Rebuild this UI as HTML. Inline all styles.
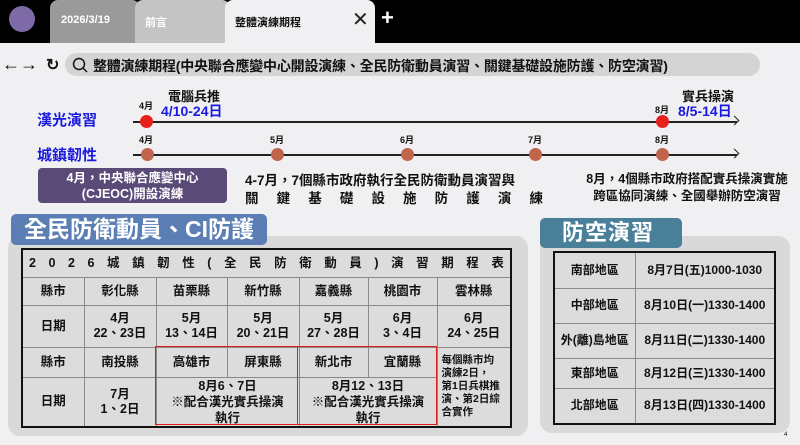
<!DOCTYPE html>
<html><head><meta charset="utf-8"><style>
*{margin:0;padding:0;box-sizing:border-box}
body{width:800px;height:445px;overflow:hidden;background:#f0f0f2;font-family:"Liberation Sans","Noto Sans CJK TC",sans-serif;position:relative;color:#111}
.a{position:absolute;white-space:nowrap}
.b{font-weight:bold}
table{border-collapse:collapse;table-layout:fixed;position:absolute;border:2px solid #111;background:#dcdcdc}
td{border:1px solid #8a8a8a;text-align:center;font-weight:bold;font-size:12.5px;line-height:15px;padding:0}
.dot{position:absolute;width:13px;height:13px;border-radius:50%}
.m{font-size:9px;font-weight:bold;position:absolute}
.j{display:flex;justify-content:space-between}
</style></head><body>
<div class="a" style="left:0;top:0;width:800px;height:43px;background:#000"></div>
<div class="a" style="left:9px;top:6px;width:26px;height:26px;border-radius:50%;background:#7f6aa8"></div>
<div class="a" style="left:50px;top:0;width:90px;height:43px;background:#9a9a9a;border-radius:8px 8px 0 0"></div>
<div class="a" style="left:135px;top:0;width:95px;height:43px;background:#c4c4c4;border-radius:8px 8px 0 0"></div>
<div class="a" style="left:225px;top:0;width:150px;height:43px;background:#f0f0f2;border-radius:8px 8px 0 0"></div>
<div class="a b" style="left:61px;top:14px;font-size:11px;color:#fff">2026/3/19</div>
<div class="a b" style="left:145px;top:14px;font-size:11px;color:#fff">前言</div>
<div class="a b" style="left:235px;top:14px;font-size:11px;color:#111">整體演練期程</div>
<div class="a" style="left:352px;top:7px;font-size:20px;color:#222">✕</div>
<div class="a b" style="left:381px;top:5px;font-size:22px;color:#fff">+</div>
<div class="a b" style="left:2px;top:54px;font-size:18px">←→</div>
<div class="a b" style="left:46px;top:55px;font-size:16px">↻</div>
<div class="a" style="left:65px;top:53px;width:695px;height:23px;background:#d4d4d4;border-radius:12px"></div>
<svg class="a" style="left:72px;top:57px" width="16" height="16"><circle cx="7" cy="7" r="5.5" fill="none" stroke="#111" stroke-width="1.5"/><line x1="11" y1="11" x2="15" y2="15" stroke="#111" stroke-width="1.5"/></svg>
<div class="a b" style="left:93px;top:56px;font-size:14px;letter-spacing:-0.2px">整體演練期程(中央聯合應變中心開設演練、全民防衛動員演習、關鍵基礎設施防護、防空演習)</div>

<div class="a b" style="left:37px;top:109px;font-size:15px;color:#1a1adf">漢光演習</div>
<div class="a b" style="left:37px;top:144px;font-size:15px;color:#1a1adf">城鎮韌性</div>
<div class="a" style="left:133px;top:121px;width:604px;height:1.5px;background:#222"></div>
<div class="a" style="left:133px;top:154px;width:604px;height:1.5px;background:#222"></div>
<div class="a" style="left:731px;top:117px;width:7px;height:7px;border-top:1.5px solid #222;border-right:1.5px solid #222;transform:rotate(45deg)"></div>
<div class="a" style="left:731px;top:150px;width:7px;height:7px;border-top:1.5px solid #222;border-right:1.5px solid #222;transform:rotate(45deg)"></div>
<div class="dot" style="left:140px;top:115px;background:#e8201c"></div>
<div class="dot" style="left:656px;top:115px;background:#e8201c"></div>
<div class="dot" style="left:141px;top:148px;background:#c0644c"></div>
<div class="dot" style="left:271px;top:148px;background:#c0644c"></div>
<div class="dot" style="left:401px;top:148px;background:#c0644c"></div>
<div class="dot" style="left:529px;top:148px;background:#c0644c"></div>
<div class="dot" style="left:656px;top:148px;background:#c0644c"></div>
<div class="m" style="left:139px;top:99px">4月</div>
<div class="m" style="left:655px;top:103px">8月</div>
<div class="m" style="left:139px;top:133px">4月</div>
<div class="m" style="left:270px;top:133px">5月</div>
<div class="m" style="left:400px;top:133px">6月</div>
<div class="m" style="left:528px;top:133px">7月</div>
<div class="m" style="left:655px;top:133px">8月</div>
<div class="a b" style="left:168px;top:86px;font-size:13px">電腦兵推</div>
<div class="a b" style="left:161px;top:101px;font-size:14px;color:#1a1adf">4/10-24日</div>
<div class="a b" style="left:682px;top:86px;font-size:13px">實兵操演</div>
<div class="a b" style="left:678px;top:101px;font-size:14px;color:#1a1adf">8/5-14日</div>
<div class="a b" style="left:38px;top:168px;width:189px;height:35px;background:#5a4a78;border-radius:4px;color:#fff;font-size:12.5px;line-height:16px;text-align:center;padding-top:2px">4月，中央聯合應變中心<br>(CJEOC)開設演練</div>
<div class="a b" style="left:245px;top:172px;width:298px;font-size:13.5px;line-height:18px">
<div class="j"><span>4-7月，7個縣市政府執行全民防衛動員演習與</span></div>
<div class="j"><span>關</span><span>鍵</span><span>基</span><span>礎</span><span>設</span><span>施</span><span>防</span><span>護</span><span>演</span><span>練</span></div></div>
<div class="a b" style="left:575px;top:171px;width:224px;font-size:12.5px;line-height:17px;text-align:center">8月，4個縣市政府搭配實兵操演實施<br>跨區協同演練、全國舉辦防空演習</div>

<div class="a" style="left:8px;top:236px;width:520px;height:200px;background:#d9d9d9;border-radius:12px"></div>
<div class="a b" style="left:11px;top:214px;width:256px;height:31px;background:#5b7fb5;border-radius:5px;color:#fff;font-size:23px;line-height:31px;padding-left:13px">全民防衛動員、CI防護</div>
<table style="left:21px;top:248px;width:489px">
<col style="width:62px"><col style="width:72px"><col style="width:71px"><col style="width:72px"><col style="width:69px"><col style="width:69px"><col style="width:74px">
<tr style="height:28px"><td colspan="7" style="padding:0 6px"><div class="j"><span>2</span><span>0</span><span>2</span><span>6</span><span>城</span><span>鎮</span><span>韌</span><span>性</span><span>(</span><span>全</span><span>民</span><span>防</span><span>衛</span><span>動</span><span>員</span><span>)</span><span>演</span><span>習</span><span>期</span><span>程</span><span>表</span></div></td></tr>
<tr style="height:28px"><td>縣市</td><td>彰化縣</td><td>苗栗縣</td><td>新竹縣</td><td>嘉義縣</td><td>桃園市</td><td>雲林縣</td></tr>
<tr style="height:42px"><td>日期</td><td>4月<br>22、23日</td><td>5月<br>13、14日</td><td>5月<br>20、21日</td><td>5月<br>27、28日</td><td>6月<br>3、4日</td><td>6月<br>24、25日</td></tr>
<tr style="height:30px"><td>縣市</td><td>南投縣</td><td>高雄市</td><td>屏東縣</td><td>新北市</td><td>宜蘭縣</td><td rowspan="2" style="font-size:10.5px;line-height:13px;text-align:left;padding-left:4px;white-space:normal">每個縣市均<br>演練2日，<br>第1日兵棋推<br>演、第2日綜<br>合實作</td></tr>
<tr style="height:47px"><td>日期</td><td>7月<br>1、2日</td><td colspan="2" style="line-height:16px">8月6、7日<br>※配合漢光實兵操演<br>執行</td><td colspan="2" style="line-height:16px">8月12、13日<br>※配合漢光實兵操演<br>執行</td></tr>
</table>
<div class="a" style="left:155px;top:346px;width:143px;height:79px;border:1.5px solid #e21c1c"></div>
<div class="a" style="left:297px;top:346px;width:140px;height:79px;border:1.5px solid #e21c1c"></div>

<div class="a" style="left:540px;top:236px;width:250px;height:197px;background:#d9d9d9;border-radius:12px"></div>
<div class="a b" style="left:540px;top:218px;width:142px;height:30px;background:#4a7f9a;border-radius:5px;color:#fff;font-size:22px;line-height:30px;padding-left:22px;letter-spacing:1px">防空演習</div>
<table style="left:553px;top:251px;width:221px">
<col style="width:81px"><col style="width:140px">
<tr style="height:36px"><td style="font-size:12px">南部地區</td><td style="font-size:12px">8月7日(五)1000-1030</td></tr>
<tr style="height:35px"><td style="font-size:12px">中部地區</td><td style="font-size:12px">8月10日(一)1330-1400</td></tr>
<tr style="height:35px"><td style="font-size:12px">外(離)島地區</td><td style="font-size:12px">8月11日(二)1330-1400</td></tr>
<tr style="height:30px"><td style="font-size:12px">東部地區</td><td style="font-size:12px">8月12日(三)1330-1400</td></tr>
<tr style="height:36px"><td style="font-size:12px">北部地區</td><td style="font-size:12px">8月13日(四)1330-1400</td></tr>
</table>
<div class="a" style="left:784px;top:432px;font-size:6px">4</div>
</body></html>
